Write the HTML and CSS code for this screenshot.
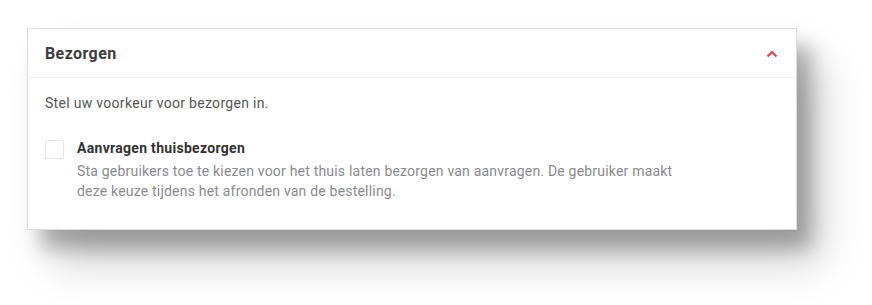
FILE: index.html
```html
<!DOCTYPE html>
<html lang="en">
<head>
    <meta charset="UTF-8">
    <title>Bezorgen</title>
    <link rel="stylesheet" href="styles.css">
</head>
<body>
    <div class="page">
        <section class="panel">
            <header class="panel-header">
                <h2>Bezorgen</h2>
                <svg class="chevron" width="12" height="8" viewBox="0 0 12 8">
                    <path d="M1.5 6.5 L6 2 L10.5 6.5" fill="none" stroke="#d9414f" stroke-width="2"/>
                </svg>
            </header>
            <div class="panel-body">
                <p class="intro">Stel uw voorkeur voor bezorgen in.</p>
                <div class="option">
                    <span class="checkbox"></span>
                    <div class="option-text">
                        <div class="option-title">Aanvragen thuisbezorgen</div>
                        <div class="option-desc">Sta gebruikers toe te kiezen voor het thuis laten bezorgen van aanvragen. De gebruiker maakt deze keuze tijdens het afronden van de bestelling.</div>
                    </div>
                </div>
            </div>
        </section>
    </div>
</body>
</html>
```

FILE: styles.css
```css
body {
    margin: 0;
    background-color: #fff;
    font-family: Roboto, "Liberation Sans", sans-serif;
}

.page {
    min-height: 305px;
    box-sizing: border-box;
    padding: 28px 0 0 27px;
}

.panel {
    width: 768px;
    border: 1px solid #dcdcdc;
    background-color: #fff;
    box-shadow: 14px 18px 18px rgba(0, 0, 0, 0.26), 24px 32px 40px rgba(0, 0, 0, 0.2);
}

.panel-header {
    height: 48px;
    display: flex;
    align-items: center;
    justify-content: space-between;
    padding: 0 18px 0 17px;
    border-bottom: 1px solid #f0f0f0;
}

.panel-header h2 {
    margin: 0;
    font-size: 16px;
    font-weight: 700;
    letter-spacing: 0.4px;
    color: #3c3c3c;
}

.chevron {
    margin-top: 2px;
}

.panel-body {
    padding: 15px 17px 28px;
}

.intro {
    margin: 0 0 24px;
    font-size: 14px;
    line-height: 20px;
    letter-spacing: 0.3px;
    color: #555;
}

.option {
    display: flex;
    gap: 13px;
}

.checkbox {
    width: 17px;
    height: 17px;
    border: 1px solid #e6e6e6;
    flex-shrink: 0;
    margin-top: 3px;
}

.option-title {
    font-size: 14px;
    font-weight: 700;
    letter-spacing: 0.3px;
    color: #333;
    line-height: 22px;
    margin-bottom: 2px;
}

.option-desc {
    max-width: 615px;
    font-size: 14px;
    letter-spacing: 0.2px;
    color: #8a8a8f;
    line-height: 20px;
}
```
